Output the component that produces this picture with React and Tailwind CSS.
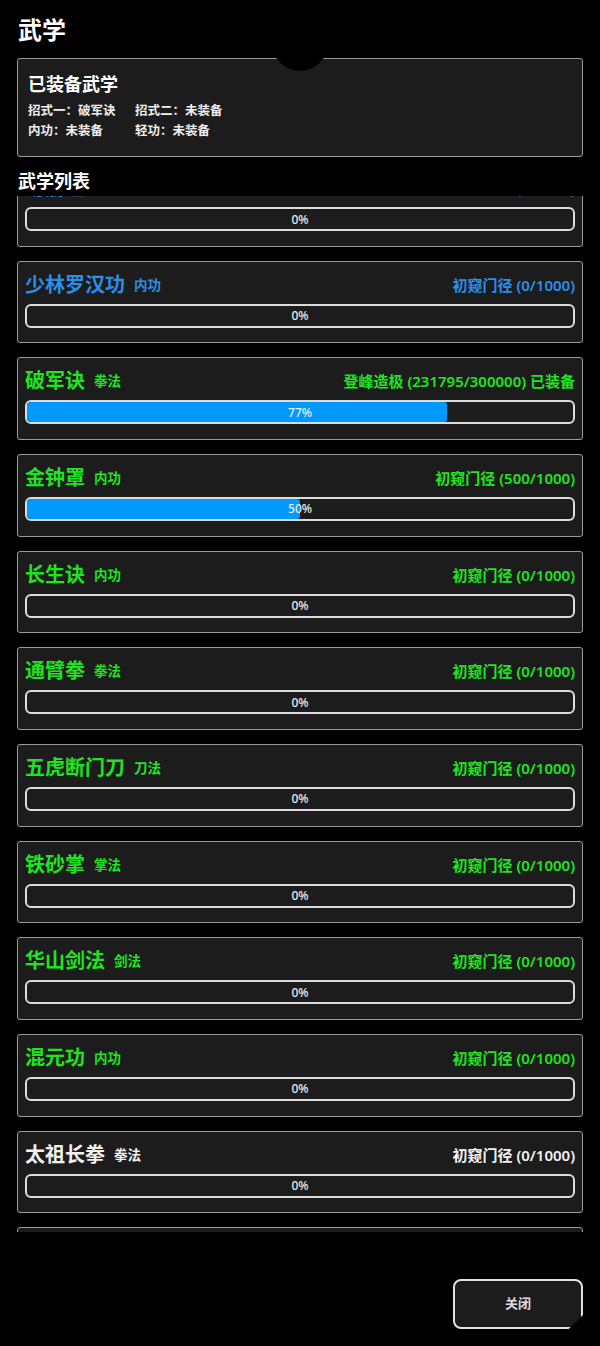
import React from "react";

const FONT = { fontFamily: '"Noto Sans", "Noto Sans CJK SC", sans-serif' };

const BLUE = "text-[#2b8fe8]";
const GREEN = "text-[#20e420]";
const WHITE = "text-[#f2f2f2]";

const skills = [
  { name: "易筋经", type: "内功", color: BLUE, right: "初窥门径 (0/1000)", pct: 0 },
  { name: "少林罗汉功", type: "内功", color: BLUE, right: "初窥门径 (0/1000)", pct: 0 },
  { name: "破军诀", type: "拳法", color: GREEN, right: "登峰造极 (231795/300000) 已装备", pct: 77 },
  { name: "金钟罩", type: "内功", color: GREEN, right: "初窥门径 (500/1000)", pct: 50 },
  { name: "长生诀", type: "内功", color: GREEN, right: "初窥门径 (0/1000)", pct: 0 },
  { name: "通臂拳", type: "拳法", color: GREEN, right: "初窥门径 (0/1000)", pct: 0 },
  { name: "五虎断门刀", type: "刀法", color: GREEN, right: "初窥门径 (0/1000)", pct: 0 },
  { name: "铁砂掌", type: "掌法", color: GREEN, right: "初窥门径 (0/1000)", pct: 0 },
  { name: "华山剑法", type: "剑法", color: GREEN, right: "初窥门径 (0/1000)", pct: 0 },
  { name: "混元功", type: "内功", color: GREEN, right: "初窥门径 (0/1000)", pct: 0 },
  { name: "太祖长拳", type: "拳法", color: WHITE, right: "初窥门径 (0/1000)", pct: 0 },
  { name: "罗汉拳", type: "拳法", color: WHITE, right: "初窥门径 (0/1000)", pct: 0 },
];

function SkillCard({ s }) {
  return (
    <div className="border border-[#9a9a9a] rounded-[3px] bg-[#1c1c1c] px-[7px] pt-[10px] pb-[14.67px]">
      <div className={`flex items-center justify-between h-[26px] ${s.color}`}>
        <div className="flex items-center gap-[9px]">
          <span className="text-[20px] font-bold leading-[26px]">{s.name}</span>
          <span className="text-[13.5px] font-bold leading-[20px]">{s.type}</span>
        </div>
        <span className="text-[15px] font-semibold leading-[20px]">{s.right}</span>
      </div>
      <div className="relative mt-[6px] h-[24px] border-2 border-[#dcdcdc] rounded-[6px] bg-[#1c1c1c] overflow-hidden">
        <div className="h-full bg-[#0099ff] rounded-r-[3px]" style={{ width: `${s.pct}%` }} />
        <div className="absolute inset-0 flex items-center justify-center pt-[1px] text-[12px] font-medium text-[#ececec]">
          {s.pct}%
        </div>
      </div>
    </div>
  );
}

export default function App() {
  return (
    <div className="bg-black min-h-[1346px] w-[600px] overflow-hidden" style={FONT}>
      <div className="px-[17px] pt-[14px]">
        <h1 className="text-[24px] font-bold leading-[32px] text-white pl-[1px]">武学</h1>

        <div className="relative mt-[12px] border border-[#9a9a9a] rounded-[3px] bg-[#1c1c1c] px-[10px] pt-[12px] pb-[15px]">
          <div className="absolute left-1/2 -translate-x-1/2 top-[-44px] w-[56px] h-[56px] rounded-full bg-black" />
          <div className="relative text-[18px] font-bold leading-[26px] text-white">已装备武学</div>
          <div className="relative mt-[4px] grid grid-cols-[107px_auto] text-[12.5px] font-bold leading-[20px] text-[#efefef]">
            <span>招式一：破军诀</span>
            <span>招式二：未装备</span>
            <span>内功：未装备</span>
            <span>轻功：未装备</span>
          </div>
        </div>

        <h2 className="mt-[12px] text-[18px] font-bold leading-[24px] text-white pl-[1px]">武学列表</h2>

        <div className="mt-[3px] h-[1036px] overflow-hidden">
          <div className="flex flex-col gap-[14px] mt-[-32px]">
            {skills.map((s) => (
              <SkillCard key={s.name} s={s} />
            ))}
          </div>
        </div>

        <div className="mt-[47px] flex justify-end">
          <button className="w-[130px] h-[50px] border-2 border-[#e0e0e0] rounded-[8px] bg-[#1c1c1c] text-[13px] font-bold text-[#dedede] [clip-path:polygon(0_0,100%_0,100%_72%,89%_100%,0_100%)]">
            关闭
          </button>
        </div>
      </div>
    </div>
  );
}
